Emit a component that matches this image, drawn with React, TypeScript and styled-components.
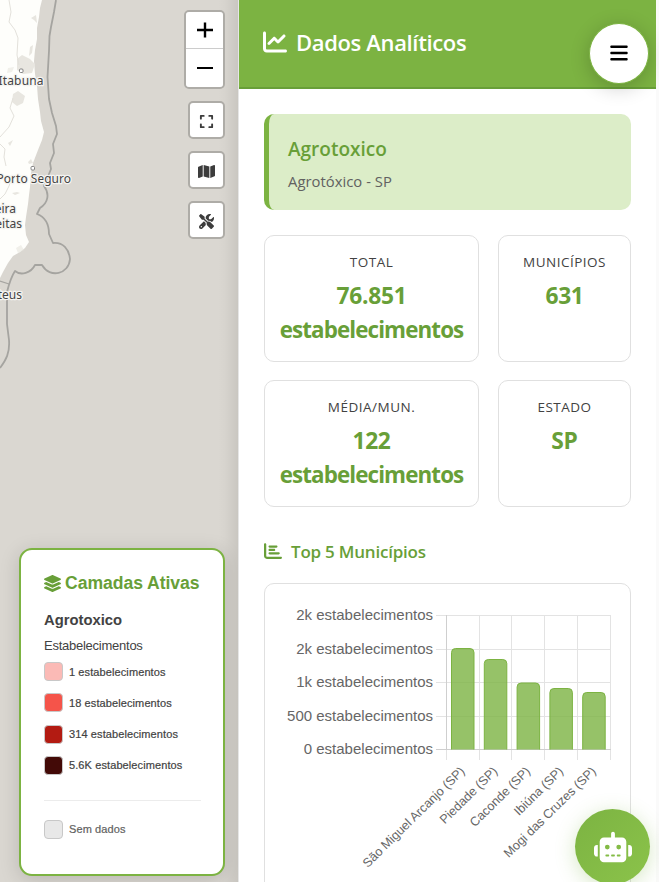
import React from "react";
import styled, { createGlobalStyle } from "styled-components";
import {
  FaBars,
  FaChartBar,
  FaChartLine,
  FaExpand,
  FaLayerGroup,
  FaMap,
  FaRobot,
  FaScrewdriverWrench,
} from "react-icons/fa6";

const GlobalStyle = createGlobalStyle`
  * { box-sizing: border-box; }
  html, body { margin: 0; height: 100%; overflow: hidden; background: #fafafa; }
  #root { height: 100%; }
  svg { display: block; flex-shrink: 0; }
`;

const ui = `"Open Sans", "Noto Sans", sans-serif`;
const arial = `"Liberation Sans", Arial, sans-serif`;

const Page = styled.div`
  display: grid;
  grid-template-columns: 239px 417px 3px;
  height: 882px;
  width: 659px;
  overflow: hidden;
  position: relative;
`;

/* ---------- map ---------- */

const MapArea = styled.section`
  position: relative;
  overflow: hidden;
  background: #dad7d1;
  border-right: 1px solid #e6e6e6;
`;

const MapDrawing = styled.svg`
  position: absolute;
  inset: 0;
`;

const MapShade = styled.div`
  position: absolute;
  inset: 0 0 0 auto;
  width: 20px;
  background: linear-gradient(to right, rgba(0, 0, 0, 0), rgba(0, 0, 0, 0.02) 40%, rgba(0, 0, 0, 0.08));
`;

const Controls = styled.div`
  position: absolute;
  top: 10px;
  right: 13px;
  display: flex;
  flex-direction: column;
  align-items: flex-end;
  gap: 12px;
`;

const ZoomBar = styled.div`
  width: 41px;
  height: 79px;
  border: 2px solid #aeaca7;
  border-radius: 5px;
  overflow: hidden;
  display: grid;
  grid-template-rows: 36px 38px;
  gap: 1px;
  background: #ccc;
`;

const ZoomButton = styled.button`
  border: 0;
  padding: 0 0 0 1px;
  background: #fff;
  display: grid;
  place-items: center;
`;

const ControlButton = styled.button`
  width: 37px;
  height: 38px;
  padding: 2px 0 0;
  border: 2px solid #aeaca7;
  border-radius: 5px;
  background: #fff;
  color: #3c3c3c;
  display: grid;
  place-items: center;
`;

/* ---------- legend ---------- */

const Legend = styled.aside`
  position: absolute;
  left: 19px;
  top: 548px;
  width: 206px;
  height: 328px;
  padding: 22px 20px 0 23px;
  border: 2px solid #7cb342;
  border-radius: 13px;
  background: #fff;
  box-shadow: 0 4px 20px rgba(0, 0, 0, 0.15);
  font-family: ${arial};
  color: #424242;
`;

const LegendTitle = styled.h2`
  display: flex;
  align-items: center;
  gap: 3px;
  height: 22px;
  margin: 0 0 16px -1px;
  font-size: 17.6px;
  font-weight: 700;
  letter-spacing: -0.05px;
  white-space: nowrap;
  color: #689f38;
`;

const LayerName = styled.h3`
  margin: 0;
  height: 20px;
  line-height: 20px;
  font-size: 14.8px;
`;

const LayerUnit = styled.p`
  margin: 8px 0 8px;
  height: 16px;
  line-height: 16px;
  font-size: 13px;
  letter-spacing: -0.25px;
`;

const LegendRow = styled.div<{ $muted?: boolean }>`
  display: flex;
  align-items: center;
  gap: 6px;
  height: 19px;
  margin-bottom: 12.3px;
  font-size: 11px;
  letter-spacing: 0.1px;
  -webkit-text-stroke: 0.2px currentColor;
  color: ${(p) => (p.$muted ? "#616161" : "#424242")};
`;

const Swatch = styled.span<{ $color: string }>`
  width: 19px;
  height: 19px;
  border: 1px solid #c8c8c8;
  border-radius: 4px;
  background: ${(p) => p.$color};
`;

const Divider = styled.hr`
  width: 157px;
  margin: 25px 0 19px;
  border: 0;
  border-top: 1px solid #ececec;
`;

/* ---------- analytics panel ---------- */

const Panel = styled.main`
  background: #fff;
  height: 882px;
  overflow: hidden;
  font-family: ${ui};
`;

const Header = styled.header`
  height: 89px;
  padding: 0 24px 3px;
  display: flex;
  align-items: center;
  gap: 9px;
  background: #7cb342;
  border-bottom: 2px solid #689f38;
  color: #fff;
`;

const Title = styled.h1`
  margin: 0;
  font-size: 22px;
  font-weight: 600;
  letter-spacing: -0.35px;
`;

const Content = styled.div`
  padding: 25px;
`;

const Summary = styled.section`
  height: 96px;
  padding: 21px 19px;
  border-left: 5px solid #7cb342;
  border-radius: 10px;
  background: #dcedc8;
`;

const SummaryName = styled.h2`
  margin: 0;
  height: 28px;
  line-height: 28px;
  font-size: 19px;
  font-weight: 600;
  color: #689f38;
`;

const SummaryText = styled.p`
  margin: 7px 0 0;
  height: 22px;
  line-height: 22px;
  font-size: 14.8px;
  letter-spacing: 0.03px;
  color: #616161;
`;

const Stats = styled.section`
  display: grid;
  grid-template-columns: 215px 133px;
  grid-auto-rows: 127px;
  gap: 18px 19px;
  margin-top: 25px;
`;

const StatCard = styled.article`
  border: 1px solid #e0e0e0;
  border-radius: 10px;
  padding-top: 16px;
  text-align: center;
`;

const StatLabel = styled.div`
  height: 20px;
  line-height: 20px;
  font-size: 13.5px;
  letter-spacing: 0.5px;
  color: #424242;
`;

const StatValue = styled.div`
  margin-top: 7px;
  line-height: 34px;
  font-size: 22.8px;
  font-weight: 700;
  letter-spacing: -0.3px;
  color: #689f38;
`;

const StatUnit = styled.div`
  font-size: 22.4px;
  letter-spacing: -0.9px;
`;

const SectionTitle = styled.h2`
  display: flex;
  align-items: center;
  gap: 9px;
  height: 26px;
  margin: 31px 0 19px;
  padding-left: 0;
  font-size: 17px;
  font-weight: 600;
  letter-spacing: -0.22px;
  color: #689f38;
`;

const ChartCard = styled.section`
  height: 330px;
  border: 1px solid #e0e0e0;
  border-radius: 10px;
`;

/* ---------- floating buttons ---------- */

const RoundButton = styled.button`
  position: absolute;
  border-radius: 50%;
  padding: 0;
  display: grid;
  place-items: center;
`;

const MenuButton = styled(RoundButton)`
  left: 589px;
  top: 23px;
  width: 60px;
  height: 61px;
  padding-bottom: 2px;
  border: 1px solid #7cb342;
  background: #fff;
  color: #000;
  box-shadow: 0 4px 20px rgba(0, 0, 0, 0.2);
`;

const RobotButton = styled(RoundButton)`
  left: 575px;
  top: 809px;
  width: 75px;
  height: 75px;
  border: 0;
  color: #fff;
  background: linear-gradient(135deg, #7cb342, #8bc34a);
  box-shadow: 0 4px 20px rgba(124, 179, 66, 0.3);
`;

const legend = [
  ["#fbbab6", "1 estabelecimentos"],
  ["#f5544a", "18 estabelecimentos"],
  ["#b31b12", "314 estabelecimentos"],
  ["#430a07", "5.6K estabelecimentos"],
];

const stats: { label: string; value: string; unit?: string }[] = [
  { label: "TOTAL", value: "76.851", unit: "estabelecimentos" },
  { label: "MUNICÍPIOS", value: "631" },
  { label: "MÉDIA/MUN.", value: "122", unit: "estabelecimentos" },
  { label: "ESTADO", value: "SP" },
];

const yTicks = ["2k", "2k", "1k", "500", "0"];
const bars: [string, number][] = [
  ["São Miguel Arcanjo (SP)", 64],
  ["Piedade (SP)", 75],
  ["Caconde (SP)", 98.5],
  ["Ibiúna (SP)", 104],
  ["Mogi das Cruzes (SP)", 108],
];

const MapBackdrop = () => (
  <MapDrawing width="239" height="882" viewBox="0 0 239 882">
    <path
      d="M0 0H42L40 8 39 17 37 28 37 39 35 50 34 61 35 74 37 86 38 99 40 112 41 121 44 132 42 140 38 150 33 163 31 173 30 187 29 195 28 204 26 217 25 225 26 235 29 242 25 248 20 252 13 256 8 263 3 272 0 278Z"
      fill="#fefefb"
    />
    <g fill="#e8e6e0">
      <path d="M17 59l5-4 8 4 5 5-3 9-9 1-6-4zM13 94l5-3 7 5-2 7-6 3-5-4zM30 47l3-2-1 8-3 3zM31 18l5-3 1 8-3-3zM12 193l5-1 3 1-5 2zM28 162l3-3 2 4-4 1zM8 143l5-3-3 6z" />
      <path d="M16 248l5-3 3 5-6 3zM8 68l6-1-2 5-5 1z" opacity=".6" />
    </g>
    <g fill="none" stroke="#e3e1db" strokeWidth="1">
      <path d="M9 0l2 12-2 10 6 8 3 8-1 17 2 10M13 98l-3 10 4 8-5 11-9 10M0 144l5 5-1 8 2 9M0 199l5-5 4-8 2-6" />
    </g>
    <g fill="none" stroke="#a5a4a0" strokeWidth="1.8" strokeLinejoin="round">
      <path d="M56 0L54 12 51 27 49.500 36 49 51 47.500 77 49 99 52 113 56 126 57 134 53 144 54 153 50 163 51 169 47 179 44 186C50 194 48 203 40 208L37 214C45 217 49 224 49 234L53 243C63 242 69 249 70 259C69 274 50 279 42 265H35C31 273 21 276 15 271C11 277 9 284 7 292V324L9 340C10 353 6 360 0 368" />
      <path d="M0 281l9 3" strokeWidth="1.2" />
    </g>
    <g fill="#fff" stroke="#777" strokeWidth="0.9">
      <rect x="19.500" y="69" width="3.500" height="3.500" rx="1" />
      <rect x="31" y="166.500" width="3.500" height="3.500" rx="1" />
    </g>
    <g
      fill="#444"
      stroke="#f5f4f1"
      strokeWidth="2.500"
      strokeLinejoin="round"
      paintOrder="stroke"
      fontFamily='"Noto Sans", sans-serif'
      fontSize="12"
      textAnchor="end"
    >
      <text x="43.500" y="85" textLength="45">Itabuna</text>
      <text x="71" y="182.500" textLength="74.500">Porto Seguro</text>
      <text x="16" y="213">eira</text>
      <text x="22" y="228">eitas</text>
      <text x="22" y="298.500">teus</text>
    </g>
  </MapDrawing>
);

const BarChart = () => (
  <svg width="365" height="298" viewBox="265 584 365 298" fontFamily={arial} fill="#666">
    <g stroke="#e3e3e3" strokeWidth="1">
      {[615.5, 649.5, 682.5, 716.5, 749.5].map((y) => (
        <path key={y} d={`M436 ${y}H611`} />
      ))}
      {[446.5, 479.5, 511.5, 544.5, 577.5, 610.5].map((x) => (
        <path key={x} d={`M${x} 615V760`} />
      ))}
    </g>
    <path d="M446.500 615V750M436 749.500H611" stroke="#cfcfcf" fill="none" />
    {bars.map(([name, top], i) => {
      const x = 451.5 + i * 32.8;
      const y = 584 + top + 0.5;
      return (
        <path
          key={name}
          d={`M${x} 749.500V${y + 4}q0-4 4-4h14.500q4 0 4 4V749.500`}
          fill="#7cb342"
          fillOpacity=".8"
          stroke="#7cb342"
        />
      );
    })}
    <g fontSize="15" textAnchor="end">
      {yTicks.map((t, i) => (
        <text key={i} x="433" y={620 + i * 33.6}>
          {t} estabelecimentos
        </text>
      ))}
    </g>
    <g fontSize="12.600" textAnchor="end">
      {bars.map(([name], i) => (
        <text key={name} transform={`translate(${465.5 + i * 32.8} 772) rotate(-44.5)`}>
          {name}
        </text>
      ))}
    </g>
  </svg>
);

export default function App() {
  return (
    <>
      <GlobalStyle />
      <Page>
        <MapArea>
          <MapBackdrop />
          <MapShade />
          <Controls>
            <ZoomBar>
              <ZoomButton aria-label="Aproximar">
                <svg width="16" height="16" stroke="#000" strokeWidth="2.400">
                  <path d="M0 8H16M8 0.500V15.500" />
                </svg>
              </ZoomButton>
              <ZoomButton aria-label="Afastar">
                <svg width="16" height="16" stroke="#000" strokeWidth="2">
                  <path d="M0 8H16" />
                </svg>
              </ZoomButton>
            </ZoomBar>
            <ControlButton aria-label="Tela cheia"><FaExpand size={15} /></ControlButton>
            <ControlButton aria-label="Mapa"><FaMap size={17} /></ControlButton>
            <ControlButton aria-label="Ferramentas"><FaScrewdriverWrench size={15} /></ControlButton>
          </Controls>
          <Legend>
            <LegendTitle><FaLayerGroup size={19} />Camadas Ativas</LegendTitle>
            <LayerName>Agrotoxico</LayerName>
            <LayerUnit>Estabelecimentos</LayerUnit>
            {legend.map(([color, label]) => (
              <LegendRow key={label}><Swatch $color={color} />{label}</LegendRow>
            ))}
            <Divider />
            <LegendRow $muted><Swatch $color="#e8e8e8" />Sem dados</LegendRow>
          </Legend>
        </MapArea>
        <Panel>
          <Header>
            <FaChartLine size={24} />
            <Title>Dados Analíticos</Title>
          </Header>
          <Content>
            <Summary>
              <SummaryName>Agrotoxico</SummaryName>
              <SummaryText>Agrotóxico - SP</SummaryText>
            </Summary>
            <Stats>
              {stats.map(({ label, value, unit }) => (
                <StatCard key={label}>
                  <StatLabel>{label}</StatLabel>
                  <StatValue>
                    {value}
                    {unit && <StatUnit>{unit}</StatUnit>}
                  </StatValue>
                </StatCard>
              ))}
            </Stats>
            <SectionTitle><FaChartBar size={18} />Top 5 Municípios</SectionTitle>
            <ChartCard><BarChart /></ChartCard>
          </Content>
        </Panel>
        <MenuButton aria-label="Menu"><FaBars size={20} /></MenuButton>
        <RobotButton aria-label="Assistente"><FaRobot size={38} /></RobotButton>
      </Page>
    </>
  );
}
